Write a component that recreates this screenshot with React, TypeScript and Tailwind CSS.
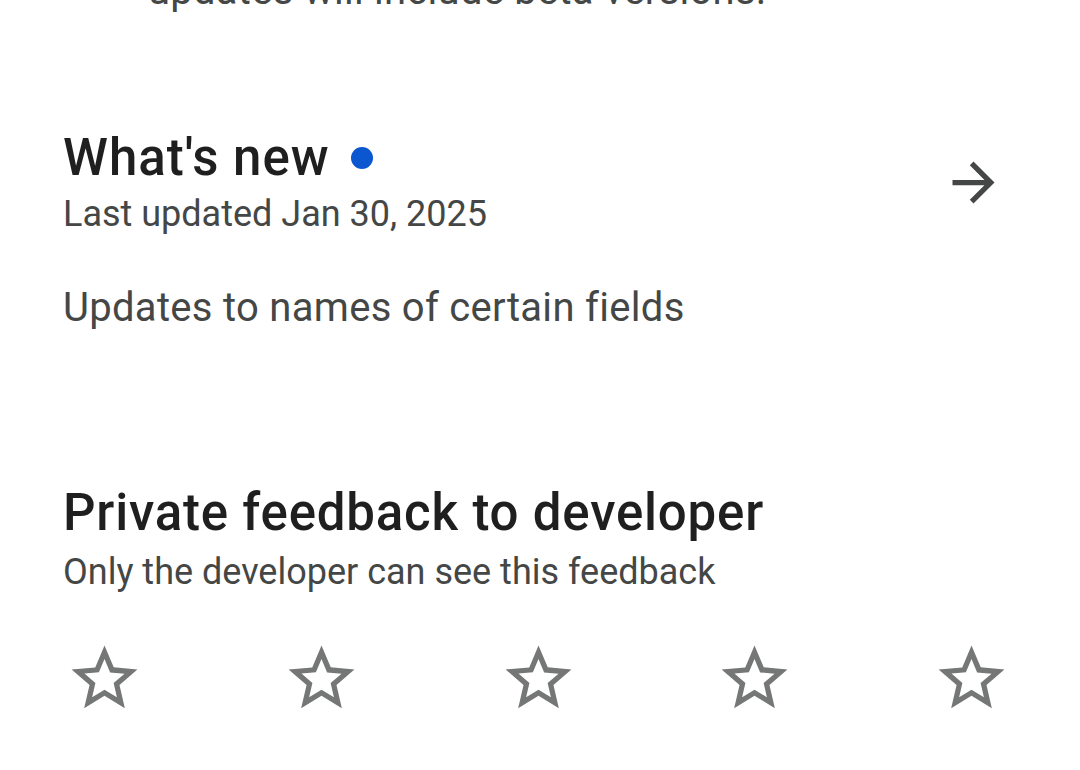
import React from "react";

const StarOutline = () => (
  <svg width="79" height="79" viewBox="0 0 24 24" fill="#747775">
    <path d="M22 9.24l-7.19-.62L12 2 9.19 8.63 2 9.24l5.46 4.73L5.82 21 12 17.27 18.18 21l-1.63-7.03L22 9.24zM12 15.4l-3.76 2.27 1-4.28-3.32-2.88 4.38-.38L12 6.1l1.71 4.04 4.38.38-3.32 2.88 1 4.28L12 15.4z" />
  </svg>
);

const ArrowForward = () => (
  <svg width="63" height="63" viewBox="0 0 24 24" fill="#444746">
    <path d="M12 4l-1.41 1.41L16.17 11H4v2h12.17l-5.58 5.59L12 20l8-8z" />
  </svg>
);

export default function App() {
  return (
    <div
      className="w-[1080px] h-[770px] overflow-hidden bg-white"
      style={{ fontFamily: "Roboto, 'Noto Sans', sans-serif" }}
    >
      <div className="mt-[-33px] pl-[148px] text-[40px] leading-[48px] text-[#444746] whitespace-nowrap tracking-[0.25px]">
        updates will include beta versions.
      </div>

      <div className="mt-[113px] px-[63px] flex items-center">
        <div className="flex-1 flex flex-col">
          <div className="flex items-center">
            <span className="text-[51px] leading-[60px] font-medium text-[#1f1f1f] tracking-[1px]">
              What's new
            </span>
            <span className="ml-[21px] w-[22px] h-[22px] rounded-full bg-[#0b57d0]" />
          </div>
          <div className="mt-[4px] text-[36px] leading-[44px] text-[#444746]">
            Last updated Jan 30, 2025
          </div>
        </div>
        <div className="mr-[12px]">
          <ArrowForward />
        </div>
      </div>

      <div className="mt-[48px] px-[63px] text-[40px] leading-[48px] text-[#444746] tracking-[0.3px]">
        Updates to names of certain fields
      </div>

      <div className="mt-[151px] px-[63px] text-[51px] leading-[60px] font-medium text-[#1f1f1f] tracking-[0.8px]">
        Private feedback to developer
      </div>
      <div className="mt-[7px] px-[63px] text-[36px] leading-[44px] text-[#444746]">
        Only the developer can see this feedback
      </div>

      <div className="mt-[45px] pl-[65px] pr-[69px] flex justify-between">
        <StarOutline />
        <StarOutline />
        <StarOutline />
        <StarOutline />
        <StarOutline />
      </div>
    </div>
  );
}
